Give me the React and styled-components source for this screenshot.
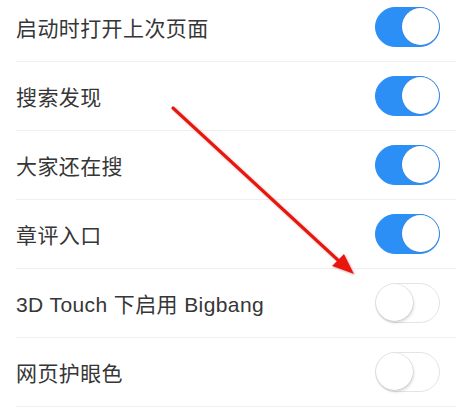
import React from "react";
import styled, { createGlobalStyle } from "styled-components";

const Global = createGlobalStyle`
  html, body { margin: 0; padding: 0; background: #fff; }
  body { overflow: hidden; }
`;

const settings = [
  { label: "启动时打开上次页面", on: true },
  { label: "搜索发现", on: true },
  { label: "大家还在搜", on: true },
  { label: "章评入口", on: true },
  { label: "3D Touch 下启用 Bigbang", on: false },
  { label: "网页护眼色", on: false },
];

function App() {
  return (
    <Page>
      <Global />
      <List>
        {settings.map((s) => (
          <Row key={s.label}>
            <Label>{s.label}</Label>
            <Switch $on={s.on}>
              <Knob $on={s.on} />
            </Switch>
          </Row>
        ))}
      </List>
      <Arrow viewBox="0 0 456 410">
        <defs>
          <filter id="glow" x="-10%" y="-10%" width="120%" height="120%">
            <feDropShadow dx="1" dy="1" stdDeviation="1.2" floodColor="#c88" floodOpacity="0.7" />
          </filter>
        </defs>
        <g filter="url(#glow)">
          <line x1="173" y1="108" x2="340" y2="262" stroke="#e8140e" strokeWidth="3.2" strokeLinecap="round" />
          <polygon points="354,274 332,266 344,254" fill="#e8140e" />
        </g>
      </Arrow>
    </Page>
  );
}

const Page = styled.div`
  position: relative;
  width: 456px;
  height: 410px;
  overflow: hidden;
  background: #fff;
  font-family: "Liberation Sans", "Noto Sans CJK SC", sans-serif;
`;

const List = styled.div`
  margin-top: -7px;
`;

const Row = styled.div`
  display: flex;
  align-items: center;
  justify-content: space-between;
  height: 68px;
  margin-left: 16px;
  padding-right: 16px;
  border-bottom: 1px solid #efefef;
`;

const Label = styled.span`
  font-size: 21px;
  color: #363636;
  letter-spacing: 0.4px;
`;

const Switch = styled.div`
  position: relative;
  width: 65px;
  height: 40px;
  box-sizing: border-box;
  border-radius: 20px;
  background: ${(p) => (p.$on ? "#2b8ff6" : "#fff")};
  border: 1.5px solid ${(p) => (p.$on ? "#2b8ff6" : "#e4e4e4")};
`;

const Knob = styled.div`
  position: absolute;
  top: 0;
  ${(p) => (p.$on ? "right: 0;" : "left: 0;")}
  width: 37px;
  height: 37px;
  border-radius: 50%;
  background: #fff;
  box-shadow: ${(p) =>
    p.$on ? "0 0 0 0.5px #3a7fd0" : "1px 2px 3px rgba(0,0,0,0.14), 0 0 0 0.5px #e0e0e0"};
`;

const Arrow = styled.svg`
  position: absolute;
  left: 0;
  top: 0;
  width: 456px;
  height: 410px;
  pointer-events: none;
`;

export default App;
